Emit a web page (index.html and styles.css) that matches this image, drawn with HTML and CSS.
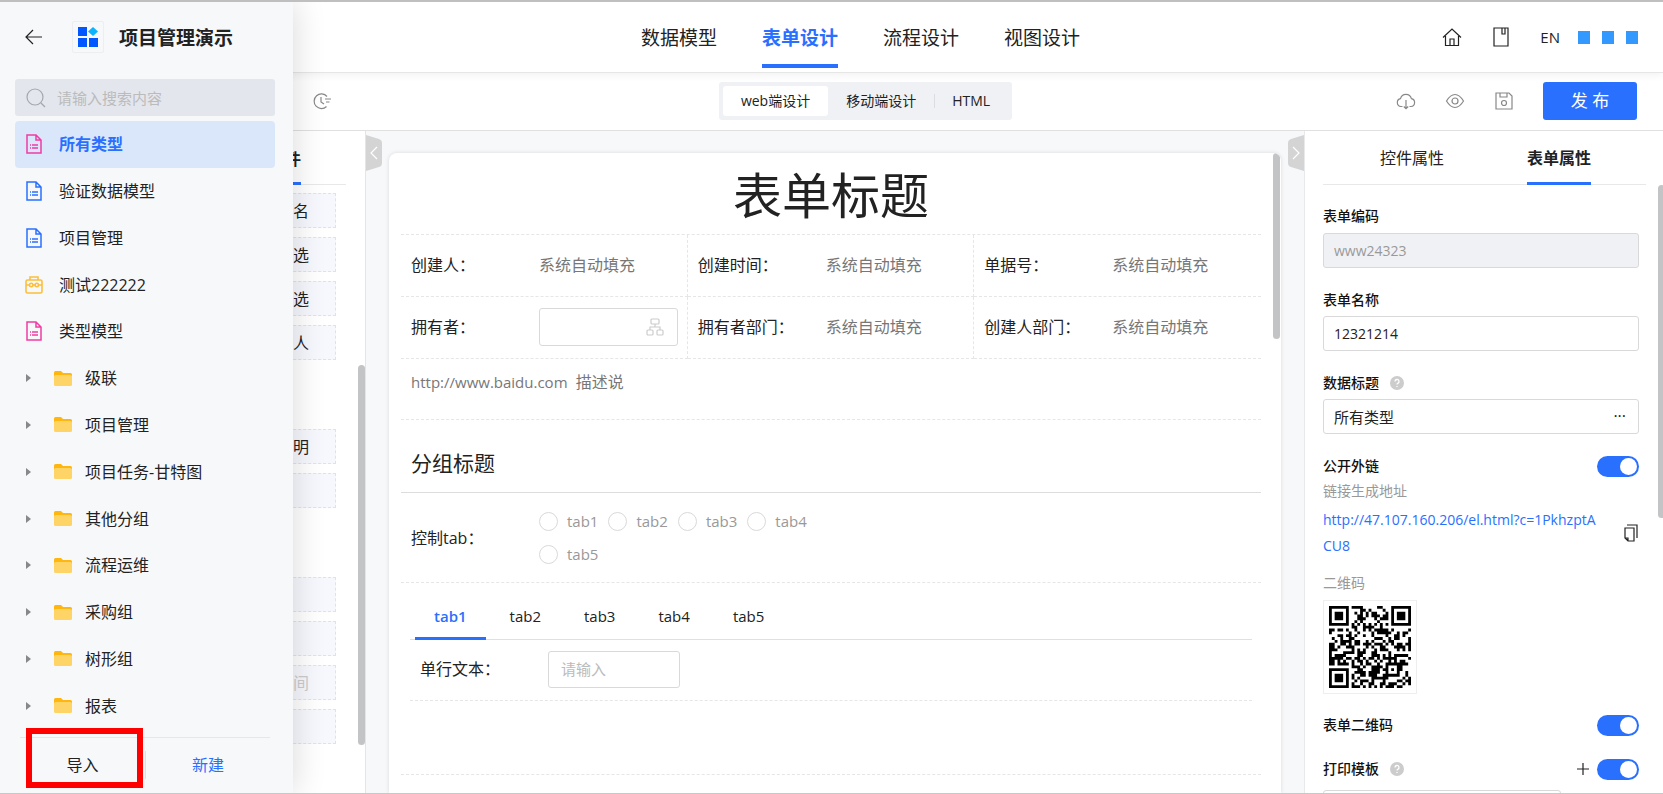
FILE: index.html
```html
<!DOCTYPE html>
<html lang="zh-CN">
<head>
  <meta charset="UTF-8">
  <meta name="viewport" content="width=device-width, initial-scale=1">
  <title>表单设计 - 项目管理演示</title>
  <link rel="stylesheet" href="styles.css">
</head>
<body>
  <!-- icon sprites -->
  <svg class="sprites" aria-hidden="true">
    <symbol id="i-doc" viewBox="0 0 16 20">
      <path d="M1 1h9l5 5v13H1z M10 1v5h5" />
      <path d="M4 11h1M6 11h6M4 14h1M6 14h6" />
    </symbol>
    <symbol id="i-folder" viewBox="0 0 18 15">
      <path class="solid" d="M0 1.5Q0 0 1.500 0H7l2 2h7.500Q18 2 18 3.500V8H0z" fill="#ffb60f" />
      <rect class="solid" y="4" width="18" height="11" rx="1.500" fill="#ffd466" />
    </symbol>
    <symbol id="i-help" viewBox="0 0 14 14">
      <circle class="solid" cx="7" cy="7" r="7" fill="#ccc" />
      <path d="M5 5.500a2 2 0 1 1 2.800 1.800q-.8.400-.8 1.200M7 10v1" stroke="#fff" stroke-width="1.300" />
    </symbol>
  </svg>

  <header class="topbar">
    <nav class="main-nav">
      <a href="#">数据模型</a>
      <a href="#" class="active">表单设计</a>
      <a href="#">流程设计</a>
      <a href="#">视图设计</a>
    </nav>
    <div class="top-actions">
      <button class="icon-btn" aria-label="首页">
        <svg width="20" height="20" viewBox="0 0 20 20"><path d="M1 10.500 10 2l9 8.500M3.500 9v9.500h13V9M8 18.500V12h4v6.500" /></svg>
      </button>
      <button class="icon-btn" aria-label="文档">
        <svg width="20" height="20" viewBox="0 0 20 20"><path d="M3 1h14v18H3zM11 1v6h3V1" /></svg>
      </button>
      <button class="lang">EN</button>
      <span class="user"><i></i><i></i><i></i></span>
    </div>
  </header>

  <div class="toolbar">
    <div class="tool-left">
      <button class="icon-btn grey" aria-label="历史">
        <svg width="18" height="18" viewBox="0 0 18 18"><path d="M14 4.500A7.300 7.300 0 1 0 13.500 14.500M8 5v5l3 2M12 7h6M13 10h3.500" /></svg>
      </button>
    </div>
    <div class="segment">
      <button class="on">web端设计</button>
      <button>移动端设计</button>
      <button class="split">HTML</button>
    </div>
    <div class="tool-right">
      <button class="icon-btn grey" aria-label="下载">
        <svg width="20" height="20" viewBox="0 0 20 20"><path d="M6.500 15.500H5A4 4 0 0 1 4.500 7.600 5.600 5.600 0 0 1 15.400 7.600 4 4 0 0 1 15 15.500h-1.500M10 9v8.500M7.800 15.500l2.200 2.200 2.200-2.200" /></svg>
      </button>
      <button class="icon-btn grey" aria-label="预览">
        <svg width="20" height="20" viewBox="0 0 20 20"><path d="M1.500 10Q5.500 3.500 10 3.500T18.500 10Q14.500 16.500 10 16.500T1.500 10z" /><circle cx="10" cy="10" r="3" /></svg>
      </button>
      <button class="icon-btn grey" aria-label="保存">
        <svg width="20" height="20" viewBox="0 0 20 20"><path d="M2 2h13l3 3v13H2zM6 2v4h7V2" /><circle cx="10" cy="12" r="2.500" /></svg>
      </button>
      <button class="publish">发 布</button>
    </div>
  </div>

  <main class="workspace">
    <aside class="widgets">
      <div class="widgets-tab"><span>控件</span></div>
      <ul>
        <li>签名</li>
        <li>单选</li>
        <li>多选</li>
        <li>联系人</li>
      </ul>
      <ul>
        <li>说明</li>
        <li></li>
      </ul>
      <ul>
        <li></li>
        <li></li>
        <li class="off">时间</li>
        <li></li>
      </ul>
      <div class="bar"></div>
    </aside>

    <section class="canvas">
      <button class="handle handle-left" aria-label="收起左侧">
        <svg width="16" height="36" viewBox="0 0 16 36"><path class="shape" d="M0 0l13 4q3 1 3 4v20q0 3-3 4L0 36z" /><path d="M11 12l-6 6 6 6" /></svg>
      </button>
      <button class="handle handle-right" aria-label="收起右侧">
        <svg width="16" height="36" viewBox="0 0 16 36"><path class="shape" d="M16 0L3 4Q0 5 0 8v20q0 3 3 4l13 4z" /><path d="M5 12l6 6-6 6" /></svg>
      </button>

      <form class="sheet">
        <h1>表单标题</h1>
        <div class="grid">
          <div class="cell"><span class="name">创建人：</span><span class="auto">系统自动填充</span></div>
          <div class="cell"><span class="name">创建时间：</span><span class="auto">系统自动填充</span></div>
          <div class="cell"><span class="name">单据号：</span><span class="auto">系统自动填充</span></div>
          <div class="cell">
            <label class="name" for="owner">拥有者：</label>
            <span class="picker">
              <input type="text" id="owner">
              <svg width="18" height="18" viewBox="0 0 18 18"><rect x="5" y="1" width="8" height="5" rx="1" /><rect x="1" y="12" width="6" height="5" rx="1" /><rect x="11" y="12" width="6" height="5" rx="1" /><path d="M9 6v3M4 12V9h10v3" /></svg>
            </span>
          </div>
          <div class="cell"><span class="name">拥有者部门：</span><span class="auto">系统自动填充</span></div>
          <div class="cell"><span class="name">创建人部门：</span><span class="auto">系统自动填充</span></div>
        </div>
        <p class="desc"><span>http://www.baidu.com</span>&nbsp; 描述说</p>
        <h2>分组标题</h2>
        <div class="row-radio">
          <span class="name">控制tab：</span>
          <div class="radios">
            <label><input type="radio" name="tab">tab1</label>
            <label><input type="radio" name="tab">tab2</label>
            <label><input type="radio" name="tab">tab3</label>
            <label><input type="radio" name="tab">tab4</label>
            <label><input type="radio" name="tab">tab5</label>
          </div>
        </div>
        <div class="tab-box">
          <div class="tabs">
            <button type="button" class="active">tab1</button>
            <button type="button">tab2</button>
            <button type="button">tab3</button>
            <button type="button">tab4</button>
            <button type="button">tab5</button>
          </div>
          <div class="row-text">
            <label class="name" for="single">单行文本：</label>
            <input type="text" id="single" placeholder="请输入">
          </div>
        </div>
        <div class="bar"></div>
      </form>
    </section>

    <aside class="props">
      <div class="props-tabs">
        <button>控件属性</button>
        <button class="active">表单属性</button>
      </div>
      <div class="props-body">
        <label class="title" for="code">表单编码</label>
        <input type="text" id="code" value="www24323" disabled>
        <label class="title" for="fname">表单名称</label>
        <input type="text" id="fname" value="12321214">
        <label class="title" for="dtitle">数据标题 <svg width="14" height="14"><use href="#i-help" /></svg></label>
        <div class="more">
          <input type="text" id="dtitle" value="所有类型">
          <span>···</span>
        </div>
        <div class="line line-link">
          <label class="title" for="link">公开外链</label>
          <input type="checkbox" class="switch" id="link" checked>
        </div>
        <p class="hint">链接生成地址</p>
        <div class="url">
          <a href="#" id="share">http://47.107.160.206/el.html?c=1PkhzptACU8</a>
          <button class="icon-btn" aria-label="复制">
            <svg width="16" height="18" viewBox="0 0 16 18"><path d="M2 4h9v13H5l-3-3zM5 17v-3H2M4 1h10v13" /></svg>
          </button>
        </div>
        <p class="hint">二维码</p>
        <div class="qr" id="qr"></div>
        <div class="line line-qr">
          <label class="title" for="fqr">表单二维码</label>
          <input type="checkbox" class="switch" id="fqr" checked>
        </div>
        <div class="line line-print">
          <label class="title" for="print">打印模板 <svg width="14" height="14"><use href="#i-help" /></svg></label>
          <button class="icon-btn" aria-label="添加">
            <svg width="12" height="12" viewBox="0 0 12 12"><path d="M0 6h12M6 0v12" /></svg>
          </button>
          <input type="checkbox" class="switch" id="print" checked>
        </div>
        <div class="template">
          <input type="text" aria-label="模板名称">
        </div>
      </div>
      <div class="bar"></div>
    </aside>
  </main>

  <aside class="drawer">
    <div class="drawer-head">
      <button class="icon-btn" aria-label="返回">
        <svg width="18" height="16" viewBox="0 0 18 16"><path d="M8 1L1 8l7 7M1 8h16" /></svg>
      </button>
      <span class="logo">
        <svg width="20" height="20" viewBox="0 0 20 20"><path d="M0 0h9v9H0zM0 11h9v9H0zM11 11h9v9h-9z" fill="#0057ff" /><path d="M15 0l5 4.500-5 4.500-5-4.500z" fill="#0ab4ff" /></svg>
      </span>
      <strong>项目管理演示</strong>
    </div>
    <div class="search">
      <svg width="20" height="20" viewBox="0 0 20 20"><circle cx="9" cy="9" r="8" /><path d="M15 15l4 4" /></svg>
      <input type="text" placeholder="请输入搜索内容" aria-label="搜索">
    </div>
    <ul class="tree">
      <li class="leaf active"><svg class="doc pink"><use href="#i-doc" /></svg>所有类型</li>
      <li class="leaf"><svg class="doc"><use href="#i-doc" /></svg>验证数据模型</li>
      <li class="leaf"><svg class="doc"><use href="#i-doc" /></svg>项目管理</li>
      <li class="leaf"><svg class="bot" viewBox="0 0 18 18"><rect x="1" y="4" width="16" height="13" rx="1.500" /><path d="M5 4V1h8v3M1 9h3.500M8 9h2M13.500 9H17" /><circle cx="6.200" cy="9" r="1.700" /><circle cx="11.800" cy="9" r="1.700" /></svg>测试222222</li>
      <li class="leaf"><svg class="doc pink"><use href="#i-doc" /></svg>类型模型</li>
      <li><i class="caret"></i><svg class="folder"><use href="#i-folder" /></svg>级联</li>
      <li><i class="caret"></i><svg class="folder"><use href="#i-folder" /></svg>项目管理</li>
      <li><i class="caret"></i><svg class="folder"><use href="#i-folder" /></svg>项目任务-甘特图</li>
      <li><i class="caret"></i><svg class="folder"><use href="#i-folder" /></svg>其他分组</li>
      <li><i class="caret"></i><svg class="folder"><use href="#i-folder" /></svg>流程运维</li>
      <li><i class="caret"></i><svg class="folder"><use href="#i-folder" /></svg>采购组</li>
      <li><i class="caret"></i><svg class="folder"><use href="#i-folder" /></svg>树形组</li>
      <li><i class="caret"></i><svg class="folder"><use href="#i-folder" /></svg>报表</li>
    </ul>
    <div class="drawer-foot">
      <button>导入</button>
      <button class="new">新建</button>
      <span class="mark"></span>
    </div>
  </aside>

  <script src="qr.js"></script>
</body>
</html>
```
FILE: styles.css
```css
* {
  box-sizing: border-box;
}
body {
  margin: 0;
  height: 100vh;
  display: flex;
  flex-direction: column;
  overflow: hidden;
  position: relative;
  border-top: 2px solid #bfbfbf;
  border-bottom: 1px solid #c8c8c8;
  background: #fff;
  color: #222;
  font-family: "Open Sans", "Noto Sans CJK SC", sans-serif;
  font-size: 16px;
  line-height: 24px;
}
h1, h2, p, ul {
  margin: 0;
  padding: 0;
  font-weight: normal;
}
ul {
  list-style: none;
}
a {
  text-decoration: none;
  color: inherit;
}
button {
  padding: 0;
  border: 0;
  background: none;
  color: inherit;
  font: inherit;
  cursor: pointer;
}
input {
  margin: 0;
  font: inherit;
  color: inherit;
}
input[type="text"] {
  border: 1px solid #d9d9d9;
  border-radius: 3px;
  background: #fff;
  min-width: 0;
}
input::placeholder {
  color: #bbb;
}
svg {
  flex: none;
  fill: none;
  stroke: currentColor;
  stroke-width: 1.2;
}
.solid {
  stroke: none;
}
.sprites {
  position: absolute;
  width: 0;
  height: 0;
}
.icon-btn {
  display: flex;
  align-items: center;
  justify-content: center;
}
.grey {
  color: #888;
}
.bar {
  position: absolute;
  border-radius: 4px;
  background: #c3c4c6;
}

/* top bar */
.topbar {
  flex: none;
  display: grid;
  grid-template-columns: 1fr auto 1fr;
  height: 71px;
  padding: 0 25px 0 83px;
  border-bottom: 1px solid #e6e6e6;
  box-shadow: 0 2px 8px rgba(0,0,0,0.06);
  position: relative;
}
.main-nav {
  grid-column: 2;
  display: flex;
  gap: 45px;
  font-size: 19px;
}
.main-nav a {
  padding-top: 24px;
  height: 66px;
}
.main-nav .active {
  color: #2970ff;
  font-weight: bold;
  border-bottom: 4px solid #2970ff;
}
.top-actions {
  display: flex;
  align-items: center;
  justify-content: flex-end;
  height: 70px;
}
.top-actions .icon-btn {
  margin-right: 29px;
}
.lang {
  font-size: 15px;
  margin-right: 18px;
}
.user {
  display: flex;
  gap: 12px;
}
.user i {
  width: 12px;
  height: 13px;
  background: #3399ff;
}

/* toolbar */
.toolbar {
  flex: none;
  display: grid;
  grid-template-columns: 1fr auto 1fr;
  align-items: center;
  height: 58px;
  padding: 0 26px 2px 94px;
  border-bottom: 1px solid #e0e0e0;
}
.tool-left {
  padding-left: 219px;
}
.segment {
  display: flex;
  height: 38px;
  padding: 4px;
  border-radius: 3px;
  background: #f0f1f5;
  font-size: 14px;
}
.segment button {
  padding: 0 18px;
  border-radius: 3px;
}
.segment .on {
  background: #fff;
}
.segment .split {
  background: linear-gradient(#dcdde0, #dcdde0) left center / 1px 14px no-repeat;
}
.tool-right {
  display: flex;
  justify-content: flex-end;
  align-items: center;
  gap: 29px;
}
.publish {
  width: 94px;
  height: 38px;
  border-radius: 3px;
  background: #2970ff;
  color: #fff;
  font-size: 17px;
}

/* workspace */
.workspace {
  flex: 1;
  min-height: 0;
  display: flex;
}
.widgets {
  flex: none;
  position: relative;
  width: 366px;
  padding-right: 29px;
  border-right: 1px solid #e4e5e7;
}
.widgets-tab {
  height: 54px;
  margin: 0 -10px 8px 0;
  padding: 16px 45px 0 0;
  border-bottom: 1px solid #e8e8e8;
  text-align: right;
  font-weight: bold;
}
.widgets-tab span {
  display: inline-block;
  height: 38px;
  border-bottom: 3px solid #2970ff;
}
.widgets li {
  height: 35px;
  margin-bottom: 9px;
  padding: 5px 26px 0 0;
  border: 1px dashed #dfe2ec;
  background: #f7f8fe;
  text-align: right;
}
.widgets ul {
  padding-bottom: 60px;
}
.widgets .off {
  color: #ccc;
}
.widgets .bar {
  right: 0;
  top: 234px;
  width: 7px;
  height: 380px;
}

.canvas {
  flex: 1;
  position: relative;
  min-width: 0;
  padding: 22px 23px 0;
  background: #f7f8fa;
}
.handle {
  position: absolute;
  top: 4px;
  width: 16px;
  height: 36px;
  color: #fff;
}
.handle svg {
  display: block;
}
.handle .shape {
  fill: #d4d4d4;
  stroke: none;
}
.handle-left {
  left: 0;
}
.handle-right {
  right: 0;
}

.sheet {
  position: relative;
  height: 100%;
  overflow: hidden;
  padding: 0 20px 0 12px;
  border-radius: 8px 8px 0 0;
  background: #fff;
  box-shadow: 0 0 4px rgba(0,0,0,0.12);
}
.sheet .bar {
  top: 0;
  right: 1px;
  width: 7px;
  height: 186px;
}
.sheet h1 {
  height: 81px;
  font-size: 49px;
  line-height: 84px;
  text-align: center;
}
.grid {
  display: grid;
  grid-template-columns: repeat(3, 1fr);
  border-top: 1px dashed #e6e6e6;
}
.cell {
  display: flex;
  align-items: center;
  height: 62px;
  padding: 0 9px 2px 10px;
  border-bottom: 1px dashed #e6e6e6;
  border-right: 1px dashed #e6e6e6;
}
.cell:nth-child(3n) {
  border-right: 0;
}
.name {
  flex: none;
  width: 128px;
}
.auto, .desc {
  color: #777;
}
.picker {
  flex: 1;
  display: flex;
  position: relative;
  color: #ccc;
}
.picker input {
  width: 100%;
  height: 38px;
}
.picker svg {
  position: absolute;
  right: 14px;
  top: 10px;
}
.desc {
  height: 61px;
  padding: 11px 10px;
  border-bottom: 1px dashed #e6e6e6;
}
.desc span {
  font-size: 15px;
}
.sheet h2 {
  height: 73px;
  padding: 31px 10px 0;
  border-bottom: 1px solid #ddd;
  font-size: 21px;
}
.row-radio {
  display: flex;
  align-items: center;
  height: 90px;
  padding: 0 10px;
  border-bottom: 1px dashed #e6e6e6;
}
.radios {
  display: flex;
  flex-wrap: wrap;
  gap: 9px 10px;
  width: 300px;
  font-size: 15px;
  color: #999;
}
.radios label {
  display: flex;
  align-items: center;
  gap: 9px;
}
.radios input {
  appearance: none;
  width: 19px;
  height: 19px;
  border: 1px solid #d9d9d9;
  border-radius: 50%;
}
.tab-box {
  height: 192px;
  padding: 11px 9px 0;
  border-bottom: 1px dashed #e6e6e6;
}
.tabs {
  display: flex;
  gap: 5px;
  height: 46px;
  padding-left: 5px;
  border-bottom: 1px solid #e0e0e0;
  font-size: 15px;
}
.tabs button {
  padding: 0 19px 3px;
  height: 46px;
}
.tabs .active {
  color: #2970ff;
  font-weight: 600;
  border-bottom: 3px solid #2970ff;
  padding-bottom: 0;
}
.row-text {
  display: flex;
  align-items: center;
  height: 61px;
  padding: 0 10px 2px;
  border-bottom: 1px dashed #e6e6e6;
}
.row-text input {
  width: 132px;
  height: 37px;
  padding: 0 12px;
  font-size: 15px;
}

/* property panel */
.props {
  flex: none;
  position: relative;
  width: 359px;
  overflow: hidden;
  padding: 0 17px 0 18px;
  border-left: 1px solid #e8e9eb;
}
.props .bar {
  top: 54px;
  right: -2px;
  width: 7px;
  height: 333px;
}
.props-tabs {
  display: flex;
  justify-content: flex-end;
  gap: 83px;
  height: 54px;
  padding-right: 55px;
  border-bottom: 1px solid #e8e8e8;
}
.props-tabs button {
  height: 54px;
  padding-top: 3px;
  border-bottom: 3px solid transparent;
}
.props-tabs .active {
  border-color: #2970ff;
  font-weight: bold;
}
.props-body {
  display: flex;
  flex-direction: column;
  padding-right: 7px;
}
.title {
  display: flex;
  align-items: center;
  gap: 11px;
  font-size: 14px;
  font-weight: 500;
  color: #111;
}
.props-body > .title {
  margin: 20px 0 4px;
}
.props-body input[type="text"] {
  width: 100%;
  height: 35px;
  padding: 0 10px;
  font-size: 14px;
}
.props-body > .title:first-child {
  margin: 19px 0 5px;
}
.props-body input:disabled {
  background: #f0f1f5;
  color: #999;
}
.more {
  position: relative;
}
.props-body .more input[type="text"] {
  font-size: 15px;
}
.more span {
  position: absolute;
  right: 13px;
  top: 5px;
}
.line {
  display: flex;
  align-items: center;
  gap: 8px;
  height: 24px;
}
.line .title {
  margin-right: auto;
}
.line-link {
  margin-top: 20px;
}
.line-qr {
  margin-top: 19px;
}
.line-print {
  margin-top: 20px;
}
.switch {
  appearance: none;
  width: 42px;
  height: 21px;
  padding: 2px;
  border-radius: 11px;
  background: #2970ff;
}
.switch::before {
  content: "";
  display: block;
  width: 17px;
  height: 17px;
  margin-left: auto;
  border-radius: 50%;
  background: #fff;
}
.hint {
  margin-top: 1px;
  font-size: 14px;
  color: #999;
}
.url {
  display: flex;
  justify-content: space-between;
  align-items: center;
  margin: 4px 0 11px;
  font-size: 14px;
  line-height: 26px;
}
.url a {
  width: 280px;
  color: #2970ff;
  word-break: break-all;
}
.qr {
  width: 94px;
  height: 94px;
  margin-top: 5px;
  padding: 5px;
  border: 1px solid #eee;
}
.qr svg {
  display: block;
  fill: #000;
  stroke: none;
}
.template {
  width: 238px;
  margin-top: 9px;
}

/* drawer over the widget panel */
.drawer {
  position: absolute;
  left: 0;
  top: 0;
  bottom: 0;
  display: flex;
  flex-direction: column;
  width: 293px;
  padding: 0 18px 0 15px;
  background: #f7f8fa;
  box-shadow: 2px 0 30px rgba(0,0,0,0.14);
}
.drawer-head {
  display: flex;
  align-items: center;
  height: 77px;
  padding: 0 0 8px 10px;
  font-size: 19px;
}
.drawer-head strong {
  padding-top: 3px;
}
.logo {
  display: flex;
  align-items: center;
  justify-content: center;
  width: 32px;
  height: 32px;
  margin: 0 15px 0 29px;
  border: 1px solid #eceef0;
  border-radius: 2px;
}
.logo path {
  stroke: none;
}
.search {
  display: flex;
  align-items: center;
  gap: 11px;
  height: 37px;
  margin-bottom: 5px;
  padding: 0 11px;
  border-radius: 3px;
  background: #e4e6ed;
  color: #a5a7ad;
}
.search input[type="text"] {
  flex: 1;
  padding: 0;
  border: 0;
  background: none;
  font-size: 15px;
}
.tree {
  flex: 1;
  display: flex;
  flex-direction: column;
}
.tree li {
  flex: 1;
  display: flex;
  align-items: center;
  padding-left: 11px;
  border-radius: 4px;
}
.tree .active {
  background: #dae7fb;
  color: #2970ff;
  font-weight: bold;
}
.doc {
  width: 16px;
  height: 20px;
  margin-right: 17px;
  color: #2970ff;
  stroke-width: 1.5;
}
.tree .pink {
  color: #f03ca4;
}
.bot {
  width: 18px;
  height: 18px;
  margin: 0 16px 0 -1px;
  color: #fcbf3c;
  stroke-width: 1.6;
}
.caret {
  border: 4px solid transparent;
  border-left: 5px solid #888;
  border-right: 0;
  margin-right: 23px;
}
.folder {
  width: 18px;
  height: 15px;
  margin-right: 13px;
}
.drawer-foot {
  position: relative;
  display: flex;
  align-items: center;
  height: 56px;
  margin: 8px -13px 0 5px;
}
.drawer-foot::before {
  content: "";
  position: absolute;
  top: 0;
  left: 0;
  right: 18px;
  border-top: 1px solid #e5e7ea;
}
.drawer-foot button {
  width: 125px;
  height: 28px;
}
.drawer-foot .new {
  border-left: 1px solid #dfe1e5;
  color: #2970ff;
}
.drawer-foot .mark {
  position: absolute;
  left: 6px;
  top: -9px;
  width: 117px;
  height: 60px;
  border: 6px solid #f00;
}
```
FILE: qr.js
```js
// Small QR encoder: version 3, level L, byte mode, one block
const SIZE = 29;
const DATA_WORDS = 55;
const EC_WORDS = 15;
const MASK = 6;

function gfMul(a, b) {
  let r = 0;
  for (let i = 7; i >= 0; i--) {
    r = (r << 1) ^ ((r >> 7) * 0x11d);
    r ^= ((b >> i) & 1) * a;
  }
  return r;
}

function errorWords(data) {
  const gen = new Array(EC_WORDS).fill(0);
  gen[EC_WORDS - 1] = 1;
  let root = 1;
  for (let i = 0; i < EC_WORDS; i++) {
    for (let j = 0; j < EC_WORDS; j++) {
      gen[j] = gfMul(gen[j], root);
      if (j + 1 < EC_WORDS) gen[j] ^= gen[j + 1];
    }
    root = gfMul(root, 2);
  }
  const rem = new Array(EC_WORDS).fill(0);
  for (const b of data) {
    const f = b ^ rem.shift();
    rem.push(0);
    gen.forEach((g, i) => rem[i] ^= gfMul(g, f));
  }
  return rem;
}

function encode(text) {
  let bits = '0100' + text.length.toString(2).padStart(8, '0');
  for (const c of text) bits += c.charCodeAt(0).toString(2).padStart(8, '0');
  bits += '0000';
  const words = bits.match(/.{8}/g).map(b => parseInt(b, 2));
  for (let pad = 0xec; words.length < DATA_WORDS; pad ^= 0xec ^ 0x11) words.push(pad);
  return words.concat(errorWords(words));
}

function buildQr(text) {
  const cells = Array.from({ length: SIZE }, () => new Array(SIZE).fill(false));
  const fixed = Array.from({ length: SIZE }, () => new Array(SIZE).fill(false));
  const set = (x, y, dark) => {
    if (x < 0 || y < 0 || x >= SIZE || y >= SIZE) return;
    cells[y][x] = !!dark;
    fixed[y][x] = true;
  };

  for (let i = 0; i < SIZE; i++) {
    set(6, i, i % 2 === 0);
    set(i, 6, i % 2 === 0);
  }
  for (const [cx, cy] of [[3, 3], [SIZE - 4, 3], [3, SIZE - 4]]) {
    for (let dy = -4; dy <= 4; dy++) {
      for (let dx = -4; dx <= 4; dx++) {
        const d = Math.max(Math.abs(dx), Math.abs(dy));
        set(cx + dx, cy + dy, d !== 2 && d !== 4);
      }
    }
  }
  for (let dy = -2; dy <= 2; dy++) {
    for (let dx = -2; dx <= 2; dx++) {
      set(22 + dx, 22 + dy, Math.max(Math.abs(dx), Math.abs(dy)) !== 1);
    }
  }

  // format bits
  const fmt = (1 << 3) | MASK;
  let rem = fmt;
  for (let i = 0; i < 10; i++) rem = (rem << 1) ^ ((rem >> 9) * 0x537);
  const f = ((fmt << 10) | rem) ^ 0x5412;
  const bit = i => (f >> i) & 1;
  for (let i = 0; i < 6; i++) set(8, i, bit(i));
  set(8, 7, bit(6));
  set(8, 8, bit(7));
  set(7, 8, bit(8));
  for (let i = 9; i < 15; i++) set(14 - i, 8, bit(i));
  for (let i = 0; i < 8; i++) set(SIZE - 1 - i, 8, bit(i));
  for (let i = 8; i < 15; i++) set(8, SIZE - 15 + i, bit(i));
  set(8, SIZE - 8, 1);

  // zigzag data placement
  const words = encode(text);
  let n = 0;
  for (let right = SIZE - 1; right >= 1; right -= 2) {
    if (right === 6) right = 5;
    for (let v = 0; v < SIZE; v++) {
      for (let j = 0; j < 2; j++) {
        const x = right - j;
        const up = ((right + 1) & 2) === 0;
        const y = up ? SIZE - 1 - v : v;
        if (fixed[y][x]) continue;
        const dark = n < words.length * 8 && (words[n >> 3] >> (7 - (n & 7))) & 1;
        const flip = (x * y % 2 + x * y % 3) % 2 === 0;
        cells[y][x] = !!dark !== flip;
        n++;
      }
    }
  }
  return cells;
}

const cells = buildQr(document.getElementById('share').textContent);
let d = '';
cells.forEach((row, y) => row.forEach((dark, x) => {
  if (dark) d += `M${x} ${y}h1v1h-1z`;
}));
document.getElementById('qr').innerHTML =
  `<svg width="82" height="82" viewBox="0 0 ${SIZE} ${SIZE}"><path d="${d}"/></svg>`;
```
